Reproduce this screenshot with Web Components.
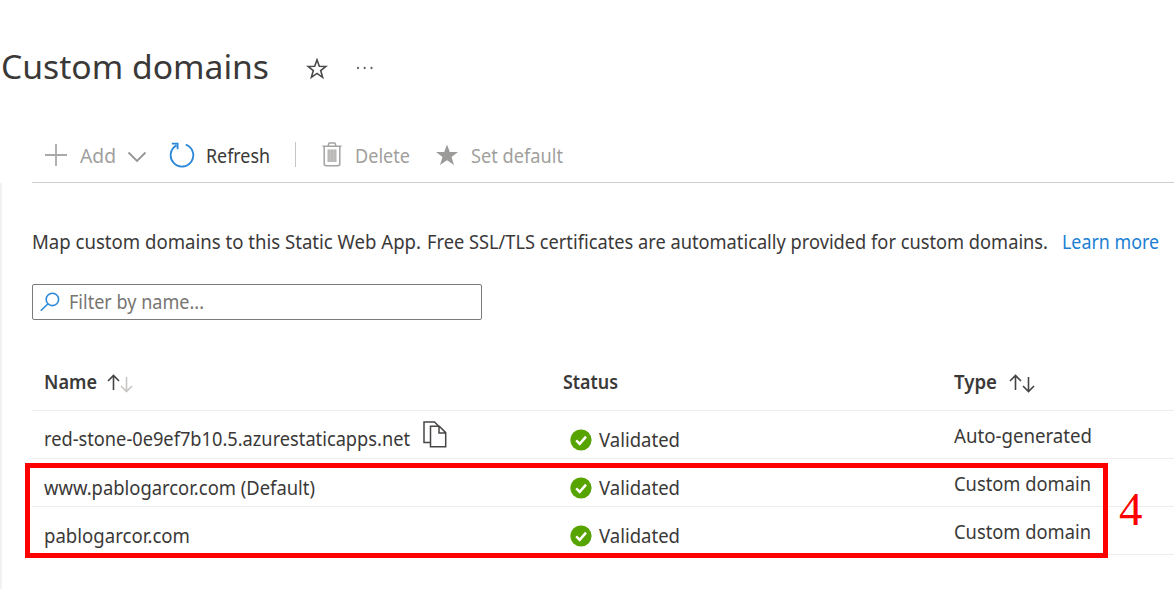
<!DOCTYPE html>
<html lang="en">
<head>
<meta charset="utf-8">
<title>Custom domains</title>
<style>
html,body{margin:0;height:100%;overflow:hidden;background:#fff}
body{font-family:"Noto Sans","Open Sans",sans-serif;color:#3a3938}
</style>
</head>
<body>
<domains-page></domains-page>
<script>
function define(name, html, setup) {
  customElements.define(name, class extends HTMLElement {
    connectedCallback() {
      if (this.shadowRoot) return;
      this.attachShadow({mode: 'open'}).innerHTML = html;
      if (setup) setup(this, this.shadowRoot);
    }
  });
}

/* One line of text set to a fixed measure. */
define('fit-text', `<style>
:host{display:block;white-space:nowrap;font-size:20px;line-height:28px;flex:none}
span{display:inline-block;transform-origin:0 50%}
</style><span><slot></slot></span>`, (el, root) => {
  const w = +el.getAttribute('width');
  const span = root.querySelector('span');
  el.style.fontSize = (el.getAttribute('size') || 20) + 'px';
  const natural = span.getBoundingClientRect().width;
  el.style.width = w + 'px';
  span.style.transform = `scaleX(${w / natural})`;
});

const icons = {
  star: [22, 22, '<path d="M11 1.8 13.3 8.2 20 8.4 14.7 12.5 16.6 19.3 11 15.4 5.4 19.3 7.3 12.5 2 8.4 8.7 8.2Z" fill="none" stroke="#4c4a48" stroke-width="1.6"/>'],
  dots: [18, 4, '<g fill="#666"><circle cx="2" cy="2" r="1.15"/><circle cx="8.7" cy="2" r="1.15"/><circle cx="15.5" cy="2" r="1.15"/></g>'],
  add: [24, 24, '<path d="M12 1V23M1 12H23" fill="none" stroke="#aaa9a8" stroke-width="1.8"/>'],
  chevron: [20, 12, '<path d="M1.5 1.5 10 10 18.5 1.5" fill="none" stroke="#969594" stroke-width="1.8"/>'],
  refresh: [26, 26, '<path d="M16.8 2.6A11.3 11.3 0 1 1 7.4 3.4M2.8 1.6H8.6V7.2" fill="none" stroke="#2b88d8" stroke-width="1.8"/>'],
  trash: [20, 25, '<g fill="none" stroke="#a5a4a3" stroke-width="1.5"><path d="M.5 4.2H19.5M6.5 4V2Q6.5 1 7.5 1H12.5Q13.5 1 13.5 2V4M2.2 4.5V21.8Q2.2 23.7 4.2 23.7H15.8Q17.8 23.7 17.8 21.8V4.5"/></g><path d="M5.4 7.5H14.6V20H5.4Z" fill="#c3c2c1"/><path d="M7 7.5V20M10 7.5V20M13 7.5V20" stroke="#b4b3b2" stroke-width="1.2"/>'],
  solid: [24, 22, '<path d="M12 .5 14.8 8H23L16.5 13 19 21 12 16.3 5 21 7.5 13 1 8H9.2Z" fill="#9c9b9a"/>'],
  search: [20, 20, '<g fill="none" stroke="#2b88d8" stroke-width="1.6"><circle cx="12.4" cy="7.4" r="6.2"/><path d="M8 11.8.8 18.8"/></g>'],
  up: [13, 17, '<path d="M6.5 16V1.5M1 7 6.5 1.5 12 7" fill="none" stroke="#444" stroke-width="1.6"/>'],
  down: [13, 17, '<path d="M6.5 1V15.5M1 10 6.5 15.5 12 10" fill="none" stroke="currentColor" stroke-width="1.6"/>'],
  copy: [24, 27, '<path d="M7 21.5H1V1H11.5L15.3 4.8M7.5 5.2H16.3L22.7 11.6V25.8H7.5ZM16 5.5V12H22.5" fill="none" stroke="#484644" stroke-width="1.5"/>'],
  check: [22, 22, '<circle cx="11" cy="11" r="10.6" fill="#57a300"/><path d="M6.2 11.3 9.7 14.8 16 7.6" fill="none" stroke="#fff" stroke-width="2.5"/>']
};
define('ui-icon', `<style>:host{display:block;flex:none}svg{display:block}</style>`, (el, root) => {
  const [w, h, body] = icons[el.getAttribute('name')];
  root.innerHTML += `<svg width="${w}" height="${h}" viewBox="0 0 ${w} ${h}">${body}</svg>`;
});

define('page-title', `<style>
:host{display:flex;align-items:center;height:135px;box-sizing:border-box;padding-left:1px}
fit-text{line-height:44px;padding-bottom:1px}
.star{margin-left:37px;padding-top:2px}.dots{margin-left:28px}
</style><fit-text size="33" width="268">Custom domains</fit-text><ui-icon class="star" name="star"></ui-icon><ui-icon class="dots" name="dots"></ui-icon>`);

define('command-bar', `<style>
:host{display:flex;align-items:center;height:48px;box-sizing:border-box;padding:0 0 8px 12px;margin-left:32px;border-bottom:1px solid #cfcecd;color:#a19f9d}
.on{color:#3a3938}
fit-text{padding-top:3px}
i{width:1px;height:25px;background:#c8c6c4;margin:0 26px 0 25px}
</style>
<ui-icon name="add"></ui-icon><fit-text width="36" style="margin-left:12px">Add</fit-text><ui-icon name="chevron" style="margin-left:11px;padding-top:4px"></ui-icon>
<ui-icon name="refresh" style="margin-left:22px"></ui-icon><fit-text class="on" width="64" style="margin-left:11px">Refresh</fit-text><i></i>
<ui-icon name="trash"></ui-icon><fit-text width="55" style="margin-left:13px">Delete</fit-text>
<ui-icon name="solid" style="margin-left:25px"></ui-icon><fit-text width="92" style="margin-left:12px">Set default</fit-text>`);

define('filter-box', `<style>
:host{display:flex;align-items:center;box-sizing:border-box;width:450px;height:36px;border:1px solid #7d7b79;border-radius:2px;padding-left:7px;color:#777573}
fit-text{margin-left:9px}
</style><ui-icon name="search"></ui-icon><fit-text width="135">Filter by name...</fit-text>`);

define('table-row', `<style>
:host{display:grid;grid-template-columns:519px 391px 1fr;box-sizing:border-box;height:48px;padding-left:12px;border-bottom:1px solid #eeedec}
::slotted(*){display:flex;align-items:center;height:47px;box-sizing:border-box}
</style><slot></slot>`);

define('status-badge', `<style>
:host{display:flex;align-items:center;padding-left:7px}
fit-text{margin-left:7px}
</style><ui-icon name="check"></ui-icon><fit-text width="81"><slot></slot></fit-text>`);

define('domain-table', `<style>
:host{display:block}
.head{height:54px;font-weight:600}
.head div{padding-top:3px}
.head fit-text{margin-right:10px}
</style>
<table-row class="head">
 <div><fit-text width="53">Name</fit-text><ui-icon name="up"></ui-icon><ui-icon name="down" style="color:#c8c6c4;padding-top:4px"></ui-icon></div>
 <div><fit-text width="55">Status</fit-text></div>
 <div><fit-text width="43" style="margin-right:12px">Type</fit-text><ui-icon name="up"></ui-icon><ui-icon name="down" style="color:#444;padding-top:4px"></ui-icon></div>
</table-row>
<table-row>
 <div><fit-text width="366" style="padding-top:9px">red-stone-0e9ef7b10.5.azurestaticapps.net</fit-text><ui-icon name="copy" style="margin-left:13px"></ui-icon></div>
 <status-badge style="padding-top:11px">Validated</status-badge>
 <div><fit-text width="138" style="padding-top:3px">Auto-generated</fit-text></div>
</table-row>
<table-row>
 <div><fit-text width="271" style="padding-top:11px">www.pablogarcor.com (Default)</fit-text></div>
 <status-badge style="padding-top:11px">Validated</status-badge>
 <div><fit-text width="137" style="padding-top:3px">Custom domain</fit-text></div>
</table-row>
<table-row>
 <div><fit-text width="146" style="padding-top:11px">pablogarcor.com</fit-text></div>
 <status-badge style="padding-top:11px">Validated</status-badge>
 <div><fit-text width="137" style="padding-top:3px">Custom domain</fit-text></div>
</table-row>`);

/* Numbered callout laid over the rows it points at. */
define('step-callout', `<style>
:host{position:absolute;left:25px;top:463px;display:flex;align-items:center;pointer-events:none}
div{box-sizing:border-box;width:1083px;height:95px;border:5px solid #fe0000}
span{font:47px/54px "Liberation Serif",serif;color:#fe0000;margin-left:11px;padding-bottom:4px}
</style><div></div><span><slot></slot></span>`);

define('domains-page', `<style>
:host{display:flex;flex-direction:column;height:589px;position:relative;overflow:hidden}
main{flex:1;border-left:2px solid #f3f2f1;padding:45px 0 0 30px}
.intro{display:flex}
a{color:#1b7fd4;text-decoration:none;margin-left:14px}
filter-box{margin-top:28px}
domain-table{margin-top:37px}
</style>
<page-title></page-title><command-bar></command-bar>
<main>
 <div class="intro"><fit-text width="389">Map custom domains to this Static Web App.</fit-text><fit-text width="621" style="margin-left:6px">Free SSL/TLS certificates are automatically provided for custom domains.</fit-text><a><fit-text width="97">Learn more</fit-text></a></div>
 <filter-box></filter-box>
 <domain-table></domain-table>
</main>
<step-callout>4</step-callout>`);
</script>
</body>
</html>
